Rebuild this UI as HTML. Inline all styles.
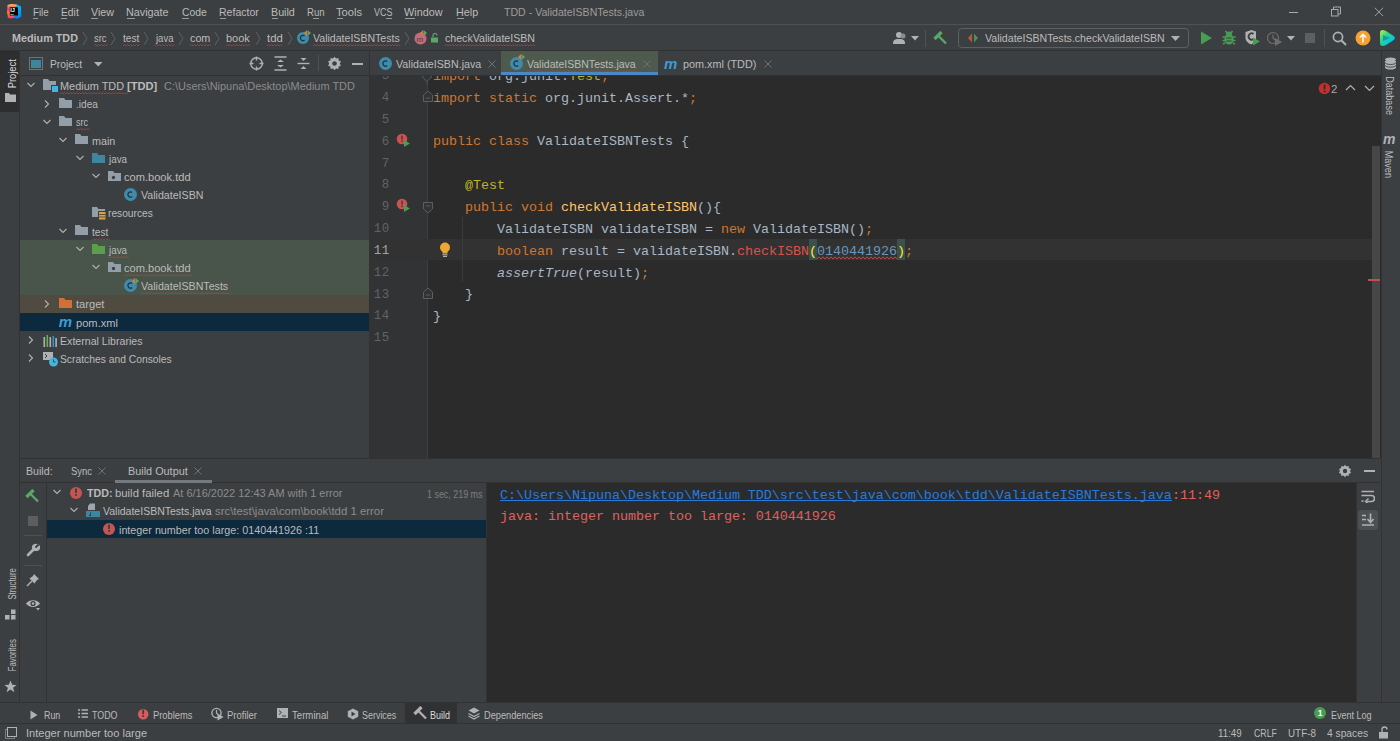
<!DOCTYPE html><html><head><meta charset="utf-8"><style>
html,body{margin:0;padding:0;width:1400px;height:741px;overflow:hidden;background:#3C3F41;}
body{position:relative;font-family:"Liberation Sans",sans-serif;}
svg{display:block}
</style></head><body>
<div style="position:absolute;left:0px;top:0px;width:1400px;height:741px;background:#3C3F41;"></div>
<div style="position:absolute;left:0px;top:24px;width:1400px;height:1px;background:#515151;"></div>
<div style="position:absolute;left:0px;top:50px;width:1400px;height:1px;background:#323232;"></div>
<div style="position:absolute;left:19px;top:51px;width:1px;height:652px;background:#323232;"></div>
<div style="position:absolute;left:0px;top:51px;width:19px;height:61px;background:#2C2E30;"></div>
<div style="position:absolute;left:20px;top:75px;width:349px;height:1px;background:#323232;"></div>
<div style="position:absolute;left:369px;top:51px;width:1px;height:407px;background:#323232;"></div>
<div style="position:absolute;left:370px;top:75px;width:1011px;height:1px;background:#323232;"></div>
<div style="position:absolute;left:370px;top:76px;width:1011px;height:382px;background:#2B2B2B;"></div>
<div style="position:absolute;left:370px;top:76px;width:58px;height:382px;background:#313335;"></div>
<div style="position:absolute;left:1381px;top:51px;width:1px;height:652px;background:#323232;"></div>
<div style="position:absolute;left:20px;top:458px;width:1360px;height:1px;background:#323232;"></div>
<div style="position:absolute;left:20px;top:482px;width:1360px;height:1px;background:#323232;"></div>
<div style="position:absolute;left:46px;top:483px;width:1px;height:219px;background:#323232;"></div>
<div style="position:absolute;left:486px;top:483px;width:1px;height:219px;background:#323232;"></div>
<div style="position:absolute;left:487px;top:483px;width:869px;height:219px;background:#2B2B2B;"></div>
<div style="position:absolute;left:1356px;top:483px;width:1px;height:219px;background:#323232;"></div>
<div style="position:absolute;left:0px;top:702px;width:1400px;height:1px;background:#323232;"></div>
<div style="position:absolute;left:0px;top:723px;width:1400px;height:1px;background:#323232;"></div>
<svg style="position:absolute;left:5px;top:2px;" width="20" height="20" viewBox="0 0 20 20"><defs><linearGradient id="lg1" x1="0" y1="0" x2="0" y2="1"><stop offset="0" stop-color="#F9C74A"/><stop offset="0.35" stop-color="#FF318C"/><stop offset="0.6" stop-color="#FC801D"/><stop offset="1" stop-color="#FF318C"/></linearGradient><linearGradient id="lg2" x1="0" y1="0" x2="0" y2="1"><stop offset="0" stop-color="#07C3F2"/><stop offset="1" stop-color="#087CFA"/></linearGradient></defs><path d="M2.5 3 L6 2 L12 2.5 L11 15 L7 16.5 L3 16 L2 10 Z" fill="url(#lg1)"/><path d="M11 2.2 L16 4.5 L16.3 14.5 L12.5 16.8 L8 15.5 L11 13Z" fill="url(#lg2)"/><rect x="4.8" y="5.3" width="8.2" height="8.2" fill="#000"/><text x="5.3" y="10.3" font-size="5.6" font-family="Liberation Sans" font-weight="bold" fill="#fff">IJ</text><rect x="5.5" y="12.2" width="3.2" height="0.8" fill="#bbb"/></svg>
<div style="position:absolute;left:32.50px;top:4.51px;font-size:11.5px;line-height:15px;color:#BBBBBB;font-family:'Liberation Sans', sans-serif;white-space:pre;transform-origin:0 0;transform:scaleX(0.8474);">File</div>
<div style="position:absolute;left:60.70px;top:4.51px;font-size:11.5px;line-height:15px;color:#BBBBBB;font-family:'Liberation Sans', sans-serif;white-space:pre;transform-origin:0 0;transform:scaleX(0.8952);">Edit</div>
<div style="position:absolute;left:90.50px;top:4.51px;font-size:11.5px;line-height:15px;color:#BBBBBB;font-family:'Liberation Sans', sans-serif;white-space:pre;transform-origin:0 0;transform:scaleX(0.9320);">View</div>
<div style="position:absolute;left:126.40px;top:4.51px;font-size:11.5px;line-height:15px;color:#BBBBBB;font-family:'Liberation Sans', sans-serif;white-space:pre;transform-origin:0 0;transform:scaleX(0.9391);">Navigate</div>
<div style="position:absolute;left:181.80px;top:4.51px;font-size:11.5px;line-height:15px;color:#BBBBBB;font-family:'Liberation Sans', sans-serif;white-space:pre;transform-origin:0 0;transform:scaleX(0.9000);">Code</div>
<div style="position:absolute;left:219.30px;top:4.51px;font-size:11.5px;line-height:15px;color:#BBBBBB;font-family:'Liberation Sans', sans-serif;white-space:pre;transform-origin:0 0;transform:scaleX(0.9159);">Refactor</div>
<div style="position:absolute;left:271.00px;top:4.51px;font-size:11.5px;line-height:15px;color:#BBBBBB;font-family:'Liberation Sans', sans-serif;white-space:pre;transform-origin:0 0;transform:scaleX(0.9308);">Build</div>
<div style="position:absolute;left:306.80px;top:4.51px;font-size:11.5px;line-height:15px;color:#BBBBBB;font-family:'Liberation Sans', sans-serif;white-space:pre;transform-origin:0 0;transform:scaleX(0.8333);">Run</div>
<div style="position:absolute;left:336.40px;top:4.51px;font-size:11.5px;line-height:15px;color:#BBBBBB;font-family:'Liberation Sans', sans-serif;white-space:pre;transform-origin:0 0;transform:scaleX(0.9741);">Tools</div>
<div style="position:absolute;left:374.30px;top:4.51px;font-size:11.5px;line-height:15px;color:#BBBBBB;font-family:'Liberation Sans', sans-serif;white-space:pre;transform-origin:0 0;transform:scaleX(0.7792);">VCS</div>
<div style="position:absolute;left:404.30px;top:4.51px;font-size:11.5px;line-height:15px;color:#BBBBBB;font-family:'Liberation Sans', sans-serif;white-space:pre;transform-origin:0 0;transform:scaleX(0.9429);">Window</div>
<div style="position:absolute;left:456.40px;top:4.51px;font-size:11.5px;line-height:15px;color:#BBBBBB;font-family:'Liberation Sans', sans-serif;white-space:pre;transform-origin:0 0;transform:scaleX(0.9375);">Help</div>
<div style="position:absolute;left:33px;top:18px;width:5px;height:1px;background:#9a9a9a;"></div>
<div style="position:absolute;left:61px;top:18px;width:6px;height:1px;background:#9a9a9a;"></div>
<div style="position:absolute;left:91px;top:18px;width:7px;height:1px;background:#9a9a9a;"></div>
<div style="position:absolute;left:127px;top:18px;width:8px;height:1px;background:#9a9a9a;"></div>
<div style="position:absolute;left:182px;top:18px;width:7px;height:1px;background:#9a9a9a;"></div>
<div style="position:absolute;left:220px;top:18px;width:6px;height:1px;background:#9a9a9a;"></div>
<div style="position:absolute;left:272px;top:18px;width:6px;height:1px;background:#9a9a9a;"></div>
<div style="position:absolute;left:313px;top:18px;width:6px;height:1px;background:#9a9a9a;"></div>
<div style="position:absolute;left:337px;top:18px;width:6px;height:1px;background:#9a9a9a;"></div>
<div style="position:absolute;left:386px;top:18px;width:6px;height:1px;background:#9a9a9a;"></div>
<div style="position:absolute;left:405px;top:18px;width:10px;height:1px;background:#9a9a9a;"></div>
<div style="position:absolute;left:457px;top:18px;width:7px;height:1px;background:#9a9a9a;"></div>
<div style="position:absolute;left:503.70px;top:4.51px;font-size:11.5px;line-height:15px;color:#9C9C9C;font-family:'Liberation Sans', sans-serif;white-space:pre;transform-origin:0 0;transform:scaleX(0.9203);">TDD - ValidateISBNTests.java</div>
<div style="position:absolute;left:1289px;top:12px;width:9px;height:1px;background:#AAAAAA;"></div>
<svg style="position:absolute;left:1331px;top:6px;" width="11" height="11" viewBox="0 0 11 11"><rect x="0.5" y="3.5" width="6.5" height="6.5" fill="none" stroke="#AAA"/><path d="M2.5 3.5 V1 H9.5 V8 H7" fill="none" stroke="#AAA"/></svg>
<svg style="position:absolute;left:1374px;top:7px;" width="10" height="10" viewBox="0 0 10 10"><path d="M0.8 0.8 L9 9 M9 0.8 L0.8 9" stroke="#AAA" stroke-width="0.9"/></svg>
<div style="position:absolute;left:12.00px;top:30.81px;font-size:11.5px;line-height:15px;color:#BBBBBB;font-family:'Liberation Sans', sans-serif;white-space:pre;font-weight:bold;transform-origin:0 0;transform:scaleX(0.9380);">Medium TDD</div>
<svg style="position:absolute;left:82px;top:31px;" width="7" height="15" viewBox="0 0 7 15"><path d="M1 1 L5 7.5 L1 14" fill="none" stroke="#5F6264" stroke-width="1"/></svg>
<svg style="position:absolute;left:110px;top:31px;" width="7" height="15" viewBox="0 0 7 15"><path d="M1 1 L5 7.5 L1 14" fill="none" stroke="#5F6264" stroke-width="1"/></svg>
<svg style="position:absolute;left:143px;top:31px;" width="7" height="15" viewBox="0 0 7 15"><path d="M1 1 L5 7.5 L1 14" fill="none" stroke="#5F6264" stroke-width="1"/></svg>
<svg style="position:absolute;left:178px;top:31px;" width="7" height="15" viewBox="0 0 7 15"><path d="M1 1 L5 7.5 L1 14" fill="none" stroke="#5F6264" stroke-width="1"/></svg>
<svg style="position:absolute;left:214px;top:31px;" width="7" height="15" viewBox="0 0 7 15"><path d="M1 1 L5 7.5 L1 14" fill="none" stroke="#5F6264" stroke-width="1"/></svg>
<svg style="position:absolute;left:255px;top:31px;" width="7" height="15" viewBox="0 0 7 15"><path d="M1 1 L5 7.5 L1 14" fill="none" stroke="#5F6264" stroke-width="1"/></svg>
<svg style="position:absolute;left:287px;top:31px;" width="7" height="15" viewBox="0 0 7 15"><path d="M1 1 L5 7.5 L1 14" fill="none" stroke="#5F6264" stroke-width="1"/></svg>
<svg style="position:absolute;left:404px;top:31px;" width="7" height="15" viewBox="0 0 7 15"><path d="M1 1 L5 7.5 L1 14" fill="none" stroke="#5F6264" stroke-width="1"/></svg>
<div style="position:absolute;left:94.00px;top:30.81px;font-size:11.5px;line-height:15px;color:#BBBBBB;font-family:'Liberation Sans', sans-serif;white-space:pre;transform-origin:0 0;transform:scaleX(0.8125);">src</div>
<svg style="position:absolute;left:94px;top:43.5px;" width="14" height="3" viewBox="0 0 14 3"><path d="M0 2 L1.5 0.5 L3 2 M3 2 L4.5 0.5 L6 2 M6 2 L7.5 0.5 L9 2 M9 2 L10.5 0.5 L12 2 M12 2 L13.5 0.5 L15 2 " fill="none" stroke="#BC3F3C" stroke-width="0.9" opacity="0.85"/></svg>
<div style="position:absolute;left:122.90px;top:30.81px;font-size:11.5px;line-height:15px;color:#BBBBBB;font-family:'Liberation Sans', sans-serif;white-space:pre;transform-origin:0 0;transform:scaleX(0.8789);">test</div>
<svg style="position:absolute;left:122.9px;top:43.5px;" width="17" height="3" viewBox="0 0 17 3"><path d="M0 2 L1.5 0.5 L3 2 M3 2 L4.5 0.5 L6 2 M6 2 L7.5 0.5 L9 2 M9 2 L10.5 0.5 L12 2 M12 2 L13.5 0.5 L15 2 M15 2 L16.5 0.5 L18 2 " fill="none" stroke="#BC3F3C" stroke-width="0.9" opacity="0.85"/></svg>
<div style="position:absolute;left:156.00px;top:30.81px;font-size:11.5px;line-height:15px;color:#BBBBBB;font-family:'Liberation Sans', sans-serif;white-space:pre;transform-origin:0 0;transform:scaleX(0.8261);">java</div>
<svg style="position:absolute;left:155px;top:43.5px;" width="20" height="3" viewBox="0 0 20 3"><path d="M0 2 L1.5 0.5 L3 2 M3 2 L4.5 0.5 L6 2 M6 2 L7.5 0.5 L9 2 M9 2 L10.5 0.5 L12 2 M12 2 L13.5 0.5 L15 2 M15 2 L16.5 0.5 L18 2 M18 2 L19.5 0.5 L21 2 " fill="none" stroke="#BC3F3C" stroke-width="0.9" opacity="0.85"/></svg>
<div style="position:absolute;left:189.80px;top:30.81px;font-size:11.5px;line-height:15px;color:#BBBBBB;font-family:'Liberation Sans', sans-serif;white-space:pre;transform-origin:0 0;transform:scaleX(0.9364);">com</div>
<svg style="position:absolute;left:189.8px;top:43.5px;" width="21" height="3" viewBox="0 0 21 3"><path d="M0 2 L1.5 0.5 L3 2 M3 2 L4.5 0.5 L6 2 M6 2 L7.5 0.5 L9 2 M9 2 L10.5 0.5 L12 2 M12 2 L13.5 0.5 L15 2 M15 2 L16.5 0.5 L18 2 M18 2 L19.5 0.5 L21 2 " fill="none" stroke="#BC3F3C" stroke-width="0.9" opacity="0.85"/></svg>
<div style="position:absolute;left:226.40px;top:30.81px;font-size:11.5px;line-height:15px;color:#BBBBBB;font-family:'Liberation Sans', sans-serif;white-space:pre;transform-origin:0 0;transform:scaleX(0.9538);">book</div>
<svg style="position:absolute;left:226.4px;top:43.5px;" width="25" height="3" viewBox="0 0 25 3"><path d="M0 2 L1.5 0.5 L3 2 M3 2 L4.5 0.5 L6 2 M6 2 L7.5 0.5 L9 2 M9 2 L10.5 0.5 L12 2 M12 2 L13.5 0.5 L15 2 M15 2 L16.5 0.5 L18 2 M18 2 L19.5 0.5 L21 2 M21 2 L22.5 0.5 L24 2 " fill="none" stroke="#BC3F3C" stroke-width="0.9" opacity="0.85"/></svg>
<div style="position:absolute;left:266.60px;top:30.81px;font-size:11.5px;line-height:15px;color:#BBBBBB;font-family:'Liberation Sans', sans-serif;white-space:pre;transform-origin:0 0;transform:scaleX(0.9875);">tdd</div>
<svg style="position:absolute;left:266.6px;top:43.5px;" width="16" height="3" viewBox="0 0 16 3"><path d="M0 2 L1.5 0.5 L3 2 M3 2 L4.5 0.5 L6 2 M6 2 L7.5 0.5 L9 2 M9 2 L10.5 0.5 L12 2 M12 2 L13.5 0.5 L15 2 " fill="none" stroke="#BC3F3C" stroke-width="0.9" opacity="0.85"/></svg>
<div style="position:absolute;left:313.00px;top:30.81px;font-size:11.5px;line-height:15px;color:#BBBBBB;font-family:'Liberation Sans', sans-serif;white-space:pre;transform-origin:0 0;transform:scaleX(0.9189);">ValidateISBNTests</div>
<svg style="position:absolute;left:313px;top:43.5px;" width="88" height="3" viewBox="0 0 88 3"><path d="M0 2 L1.5 0.5 L3 2 M3 2 L4.5 0.5 L6 2 M6 2 L7.5 0.5 L9 2 M9 2 L10.5 0.5 L12 2 M12 2 L13.5 0.5 L15 2 M15 2 L16.5 0.5 L18 2 M18 2 L19.5 0.5 L21 2 M21 2 L22.5 0.5 L24 2 M24 2 L25.5 0.5 L27 2 M27 2 L28.5 0.5 L30 2 M30 2 L31.5 0.5 L33 2 M33 2 L34.5 0.5 L36 2 M36 2 L37.5 0.5 L39 2 M39 2 L40.5 0.5 L42 2 M42 2 L43.5 0.5 L45 2 M45 2 L46.5 0.5 L48 2 M48 2 L49.5 0.5 L51 2 M51 2 L52.5 0.5 L54 2 M54 2 L55.5 0.5 L57 2 M57 2 L58.5 0.5 L60 2 M60 2 L61.5 0.5 L63 2 M63 2 L64.5 0.5 L66 2 M66 2 L67.5 0.5 L69 2 M69 2 L70.5 0.5 L72 2 M72 2 L73.5 0.5 L75 2 M75 2 L76.5 0.5 L78 2 M78 2 L79.5 0.5 L81 2 M81 2 L82.5 0.5 L84 2 M84 2 L85.5 0.5 L87 2 " fill="none" stroke="#BC3F3C" stroke-width="0.9" opacity="0.85"/></svg>
<div style="position:absolute;left:445.00px;top:30.81px;font-size:11.5px;line-height:15px;color:#BBBBBB;font-family:'Liberation Sans', sans-serif;white-space:pre;transform-origin:0 0;transform:scaleX(0.9224);">checkValidateISBN</div>
<svg style="position:absolute;left:445px;top:43.5px;" width="91" height="3" viewBox="0 0 91 3"><path d="M0 2 L1.5 0.5 L3 2 M3 2 L4.5 0.5 L6 2 M6 2 L7.5 0.5 L9 2 M9 2 L10.5 0.5 L12 2 M12 2 L13.5 0.5 L15 2 M15 2 L16.5 0.5 L18 2 M18 2 L19.5 0.5 L21 2 M21 2 L22.5 0.5 L24 2 M24 2 L25.5 0.5 L27 2 M27 2 L28.5 0.5 L30 2 M30 2 L31.5 0.5 L33 2 M33 2 L34.5 0.5 L36 2 M36 2 L37.5 0.5 L39 2 M39 2 L40.5 0.5 L42 2 M42 2 L43.5 0.5 L45 2 M45 2 L46.5 0.5 L48 2 M48 2 L49.5 0.5 L51 2 M51 2 L52.5 0.5 L54 2 M54 2 L55.5 0.5 L57 2 M57 2 L58.5 0.5 L60 2 M60 2 L61.5 0.5 L63 2 M63 2 L64.5 0.5 L66 2 M66 2 L67.5 0.5 L69 2 M69 2 L70.5 0.5 L72 2 M72 2 L73.5 0.5 L75 2 M75 2 L76.5 0.5 L78 2 M78 2 L79.5 0.5 L81 2 M81 2 L82.5 0.5 L84 2 M84 2 L85.5 0.5 L87 2 M87 2 L88.5 0.5 L90 2 " fill="none" stroke="#BC3F3C" stroke-width="0.9" opacity="0.85"/></svg>
<svg style="position:absolute;left:295.6px;top:31px;" width="14" height="14" viewBox="0 0 14 14"><circle cx="7" cy="7" r="6" fill="#3E8BAB"/><path d="M8.6 5.0 A2.5 2.6 0 1 0 8.6 9.0" fill="none" stroke="#22313A" stroke-width="1.15"/></svg>
<svg style="position:absolute;left:304px;top:30px;" width="7" height="6" viewBox="0 0 7 6"><path d="M0 3 L3 0 L3 6Z" fill="#E2783A"/><path d="M3.5 0 L7 3 L3.5 6Z" fill="#59A869"/></svg>
<svg style="position:absolute;left:414px;top:32px;" width="13" height="13" viewBox="0 0 13 13"><circle cx="6.5" cy="6.5" r="6" fill="#C46A7B"/><text x="2.6" y="9.5" font-size="8" font-family="Liberation Sans" fill="#3C3F41">m</text></svg>
<svg style="position:absolute;left:420px;top:30px;" width="7" height="6" viewBox="0 0 7 6"><path d="M0 3 L3 0 L3 6Z" fill="#E2783A"/><path d="M3.5 0 L7 3 L3.5 6Z" fill="#59A869"/></svg>
<svg style="position:absolute;left:430px;top:33px;" width="9" height="10" viewBox="0 0 9 10"><path d="M3 4 V2.5 A2 2 0 0 1 7 2.5" fill="none" stroke="#59A869" stroke-width="1.2"/><rect x="1" y="4.5" width="7" height="5" fill="#59A869"/></svg>
<svg style="position:absolute;left:893px;top:31px;" width="16" height="14" viewBox="0 0 16 14"><circle cx="6" cy="4" r="3" fill="#AFB1B3"/><path d="M0 13 C0 8 3 8 6 8 C9 8 12 8 12 13 Z" fill="#AFB1B3"/><circle cx="10" cy="5" r="2.5" fill="#8a8c8e"/></svg>
<svg style="position:absolute;left:911px;top:36px;" width="8" height="5" viewBox="0 0 8 5"><path d="M0 0 H8 L4 4.5Z" fill="#AFB1B3"/></svg>
<div style="position:absolute;left:925px;top:30px;width:1px;height:17px;background:#515151;"></div>
<svg style="position:absolute;left:933px;top:31px;" width="15" height="14" viewBox="0 0 15 14"><path d="M1.5 8 L8.5 1" stroke="#59A869" stroke-width="3.2"/><path d="M5 4.5 L13 12.5" stroke="#59A869" stroke-width="2.3"/></svg>
<svg style="position:absolute;left:958px;top:28px;" width="231" height="20" viewBox="0 0 231 20"><rect x="0.5" y="0.5" width="230" height="19" rx="3" fill="none" stroke="#5E6060"/></svg>
<svg style="position:absolute;left:967px;top:33px;" width="13" height="10" viewBox="0 0 13 10"><path d="M5 0.5 L1 5 L5 9.5Z" fill="#B05A3C"/><path d="M7 0.5 L11 5 L7 9.5Z" fill="#4E8F5B"/></svg>
<div style="position:absolute;left:984.50px;top:31.01px;font-size:11.5px;line-height:15px;color:#BBBBBB;font-family:'Liberation Sans', sans-serif;white-space:pre;transform-origin:0 0;transform:scaleX(0.9205);">ValidateISBNTests.checkValidateISBN</div>
<svg style="position:absolute;left:1171px;top:36px;" width="10" height="6" viewBox="0 0 10 6"><path d="M0 0 H9 L4.5 5Z" fill="#AFB1B3"/></svg>
<svg style="position:absolute;left:1200px;top:31px;" width="13" height="14" viewBox="0 0 13 14"><path d="M1 0.5 L12 7 L1 13.5 Z" fill="#499C54"/></svg>
<svg style="position:absolute;left:1221px;top:30px;" width="16" height="16" viewBox="0 0 16 16"><ellipse cx="8" cy="9.3" rx="4.6" ry="5.2" fill="#499C54"/><ellipse cx="8" cy="3.8" rx="3" ry="2.2" fill="#499C54"/><path d="M4.5 1 L6 3 M11.5 1 L10 3 M1.5 7 H4 M12 7 H14.5 M1.5 10.5 H4 M12 10.5 H14.5 M2 14 L4.2 12.8 M14 14 L11.8 12.8" stroke="#499C54" stroke-width="1.5"/><path d="M5.5 8 H10.5 M5.5 11 H10.5" stroke="#3C3F41" stroke-width="1.1"/></svg>
<svg style="position:absolute;left:1244px;top:29px;" width="17" height="17" viewBox="0 0 17 17"><path d="M1.5 3 L7.5 1 L12 2.5 V9 C12 12 9 14.5 7 15.5 C4.5 14.5 1.5 12 1.5 9Z" fill="#AFB1B3"/><path d="M9.5 5 A3 3.2 0 1 0 9.5 10" fill="none" stroke="#3C3F41" stroke-width="1.8"/><path d="M9 8.5 L16 12.5 L9 16.5Z" fill="#499C54"/></svg>
<svg style="position:absolute;left:1266px;top:30px;" width="18" height="16" viewBox="0 0 18 16"><circle cx="7" cy="8" r="5.5" fill="none" stroke="#6E6E6E" stroke-width="1.2"/><path d="M7 4.5 V8 L9 10" stroke="#6E6E6E" stroke-width="1.2" fill="none"/><path d="M9 8 L16 12 L9 16Z" fill="#6E6E6E"/></svg>
<svg style="position:absolute;left:1287px;top:36px;" width="9" height="5" viewBox="0 0 9 5"><path d="M0 0 H8 L4 4.5Z" fill="#AFB1B3"/></svg>
<div style="position:absolute;left:1305px;top:33px;width:10px;height:10px;background:#5C5E60;"></div>
<div style="position:absolute;left:1324px;top:29px;width:1px;height:18px;background:#515151;"></div>
<svg style="position:absolute;left:1332px;top:31px;" width="15" height="15" viewBox="0 0 15 15"><circle cx="6" cy="6" r="4.6" fill="none" stroke="#AFB1B3" stroke-width="1.7"/><path d="M9.5 9.5 L14 14" stroke="#AFB1B3" stroke-width="1.9"/></svg>
<svg style="position:absolute;left:1355px;top:30px;" width="16" height="16" viewBox="0 0 16 16"><circle cx="8" cy="8" r="7.5" fill="#F4A12F"/><path d="M8 12.5 V4.5 M4.8 7.5 L8 4.3 L11.2 7.5" fill="none" stroke="#fff" stroke-width="1.5"/></svg>
<svg style="position:absolute;left:1378px;top:29px;" width="18" height="18" viewBox="0 0 18 18"><defs><linearGradient id="tb1" x1="0" y1="0" x2="1" y2="1"><stop offset="0" stop-color="#C7E54B"/><stop offset="0.4" stop-color="#21D789"/><stop offset="0.75" stop-color="#07C3F2"/><stop offset="1" stop-color="#087CFA"/></linearGradient></defs><path d="M2 4 C2 0.5 5 0.5 8 2 L15 6.5 C17.5 8 17.5 10 15 11.5 L8 16 C5 17.5 2 17.5 2 14 Z" fill="url(#tb1)"/><path d="M5 6 L12 9 L5 12Z" fill="#0B69C7" opacity="0.55"/></svg>
<svg style="position:absolute;left:29px;top:57px;" width="14" height="13" viewBox="0 0 14 13"><rect x="0.5" y="0.5" width="13" height="12" fill="none" stroke="#6E7275"/><rect x="2" y="3" width="10" height="8" fill="#3E86A0"/></svg>
<div style="position:absolute;left:49.70px;top:57.01px;font-size:11.5px;line-height:15px;color:#BBBBBB;font-family:'Liberation Sans', sans-serif;white-space:pre;transform-origin:0 0;transform:scaleX(0.8946);">Project</div>
<svg style="position:absolute;left:94px;top:62px;" width="9" height="5" viewBox="0 0 9 5"><path d="M0 0 H8.5 L4.25 4.5Z" fill="#AFB1B3"/></svg>
<svg style="position:absolute;left:249px;top:56px;" width="15" height="15" viewBox="0 0 15 15"><circle cx="7.5" cy="7.5" r="5.8" fill="none" stroke="#AFB1B3" stroke-width="1.4"/><path d="M7.5 0.5 V4.5 M7.5 10.5 V14.5 M0.5 7.5 H4.5 M10.5 7.5 H14.5" stroke="#AFB1B3" stroke-width="1.4"/></svg>
<svg style="position:absolute;left:274px;top:56px;" width="13" height="15" viewBox="0 0 13 15"><path d="M0.5 1 H12.5 M0.5 14 H12.5" stroke="#AFB1B3" stroke-width="1.6"/><path d="M3 6 L6.5 3.5 L10 6Z M3 9 L6.5 11.5 L10 9Z" fill="#AFB1B3"/></svg>
<svg style="position:absolute;left:297px;top:56px;" width="13" height="15" viewBox="0 0 13 15"><path d="M0.5 7.5 H12.5" stroke="#AFB1B3" stroke-width="1.4"/><path d="M3.5 2 H9.5 L6.5 5Z M3.5 13 H9.5 L6.5 10Z" fill="#AFB1B3"/></svg>
<div style="position:absolute;left:318px;top:55px;width:1px;height:16px;background:#515151;"></div>
<svg style="position:absolute;left:327px;top:56px;" width="15" height="15" viewBox="0 0 15 15"><path d="M7.5 0.8 L9 2.6 L11.4 2.1 L11.6 4.4 L13.9 5.2 L12.8 7.5 L13.9 9.8 L11.6 10.6 L11.4 12.9 L9 12.4 L7.5 14.2 L6 12.4 L3.6 12.9 L3.4 10.6 L1.1 9.8 L2.2 7.5 L1.1 5.2 L3.4 4.4 L3.6 2.1 L6 2.6 Z" fill="#AFB1B3"/><circle cx="7.5" cy="7.5" r="2.3" fill="#3C3F41"/></svg>
<div style="position:absolute;left:352px;top:63px;width:11px;height:1.6px;background:#AFB1B3;"></div>
<div style="position:absolute;left:20px;top:240.0px;width:349px;height:54.599999999999994px;background:#49544A;"></div>
<div style="position:absolute;left:20px;top:294.59999999999997px;width:349px;height:18.2px;background:#4F4B41;"></div>
<div style="position:absolute;left:20px;top:312.8px;width:349px;height:18.599999999999998px;background:#0D293E;"></div>
<svg style="position:absolute;left:26.0px;top:81.3px;" width="10" height="8" viewBox="0 0 10 8"><path d="M1.5 2 L5 5.5 L8.5 2" fill="none" stroke="#AFB1B3" stroke-width="1.1"/></svg>
<svg style="position:absolute;left:43.0px;top:79px;" width="13" height="11" viewBox="0 0 13 11"><path d="M0 0 H5 L6.5 2 H13 V11 H0 Z" fill="#939FA8"/></svg>
<div style="position:absolute;left:51.0px;top:85px;width:7px;height:7px;background:#3C3F41;"></div>
<div style="position:absolute;left:52.0px;top:86px;width:6px;height:6px;background:#40B6E0;"></div>
<svg style="position:absolute;left:43.2px;top:98.5px;" width="8" height="10" viewBox="0 0 8 10"><path d="M2 1.5 L5.5 5 L2 8.5" fill="none" stroke="#AFB1B3" stroke-width="1.1"/></svg>
<svg style="position:absolute;left:59.2px;top:98px;" width="13" height="10" viewBox="0 0 13 10"><path d="M0 0 H5 L6.5 2 H13 V10 H0 Z" fill="#939FA8"/></svg>
<svg style="position:absolute;left:42.2px;top:117.69999999999999px;" width="10" height="8" viewBox="0 0 10 8"><path d="M1.5 2 L5 5.5 L8.5 2" fill="none" stroke="#AFB1B3" stroke-width="1.1"/></svg>
<svg style="position:absolute;left:59.2px;top:116px;" width="13" height="10" viewBox="0 0 13 10"><path d="M0 0 H5 L6.5 2 H13 V10 H0 Z" fill="#939FA8"/></svg>
<svg style="position:absolute;left:58.4px;top:135.9px;" width="10" height="8" viewBox="0 0 10 8"><path d="M1.5 2 L5 5.5 L8.5 2" fill="none" stroke="#AFB1B3" stroke-width="1.1"/></svg>
<svg style="position:absolute;left:75.4px;top:134px;" width="13" height="10" viewBox="0 0 13 10"><path d="M0 0 H5 L6.5 2 H13 V10 H0 Z" fill="#939FA8"/></svg>
<svg style="position:absolute;left:74.6px;top:154.1px;" width="10" height="8" viewBox="0 0 10 8"><path d="M1.5 2 L5 5.5 L8.5 2" fill="none" stroke="#AFB1B3" stroke-width="1.1"/></svg>
<svg style="position:absolute;left:91.6px;top:153px;" width="13" height="10" viewBox="0 0 13 10"><path d="M0 0 H5 L6.5 2 H13 V10 H0 Z" fill="#3E86A0"/></svg>
<svg style="position:absolute;left:90.8px;top:172.29999999999998px;" width="10" height="8" viewBox="0 0 10 8"><path d="M1.5 2 L5 5.5 L8.5 2" fill="none" stroke="#AFB1B3" stroke-width="1.1"/></svg>
<svg style="position:absolute;left:107.8px;top:171px;" width="13" height="10" viewBox="0 0 13 10"><path d="M0 0 H5 L6.5 2 H13 V10 H0 Z" fill="#939FA8"/></svg>
<svg style="position:absolute;left:110.8px;top:175px;" width="5" height="5" viewBox="0 0 5 5"><circle cx="2.5" cy="2.5" r="1.7" fill="#3C3F41"/></svg>
<svg style="position:absolute;left:123.0px;top:186.99999999999997px;" width="15" height="15" viewBox="0 0 15 15"><circle cx="7.5" cy="7.5" r="6.5" fill="#3E8BAB"/><path d="M9.1 5.5 A2.5 2.6 0 1 0 9.1 9.5" fill="none" stroke="#22313A" stroke-width="1.15"/></svg>
<svg style="position:absolute;left:91.6px;top:207px;" width="13" height="10" viewBox="0 0 13 10"><path d="M0 0 H5 L6.5 2 H13 V10 H0 Z" fill="#939FA8"/></svg>
<svg style="position:absolute;left:97.6px;top:211px;" width="8" height="9" viewBox="0 0 8 9"><rect x="0" y="0" width="8" height="9" fill="#3C3F41"/><rect x="1" y="1" width="6.5" height="7.5" fill="#D9A343"/><path d="M1 3.5 H7.5 M1 6 H7.5" stroke="#3C3F41" stroke-width="0.8"/></svg>
<svg style="position:absolute;left:58.4px;top:226.9px;" width="10" height="8" viewBox="0 0 10 8"><path d="M1.5 2 L5 5.5 L8.5 2" fill="none" stroke="#AFB1B3" stroke-width="1.1"/></svg>
<svg style="position:absolute;left:75.4px;top:225px;" width="13" height="10" viewBox="0 0 13 10"><path d="M0 0 H5 L6.5 2 H13 V10 H0 Z" fill="#939FA8"/></svg>
<svg style="position:absolute;left:74.6px;top:245.1px;" width="10" height="8" viewBox="0 0 10 8"><path d="M1.5 2 L5 5.5 L8.5 2" fill="none" stroke="#AFB1B3" stroke-width="1.1"/></svg>
<svg style="position:absolute;left:91.6px;top:244px;" width="13" height="10" viewBox="0 0 13 10"><path d="M0 0 H5 L6.5 2 H13 V10 H0 Z" fill="#5AA04A"/></svg>
<svg style="position:absolute;left:90.8px;top:263.3px;" width="10" height="8" viewBox="0 0 10 8"><path d="M1.5 2 L5 5.5 L8.5 2" fill="none" stroke="#AFB1B3" stroke-width="1.1"/></svg>
<svg style="position:absolute;left:107.8px;top:262px;" width="13" height="10" viewBox="0 0 13 10"><path d="M0 0 H5 L6.5 2 H13 V10 H0 Z" fill="#939FA8"/></svg>
<svg style="position:absolute;left:110.8px;top:266px;" width="5" height="5" viewBox="0 0 5 5"><circle cx="2.5" cy="2.5" r="1.7" fill="#3C3F41"/></svg>
<svg style="position:absolute;left:123.0px;top:278.0px;" width="15" height="15" viewBox="0 0 15 15"><circle cx="7.5" cy="7.5" r="6.5" fill="#3E8BAB"/><path d="M9.1 5.5 A2.5 2.6 0 1 0 9.1 9.5" fill="none" stroke="#22313A" stroke-width="1.15"/></svg>
<svg style="position:absolute;left:132.0px;top:278px;" width="7" height="6" viewBox="0 0 7 6"><path d="M0 3 L3 0 L3 6Z" fill="#E2783A"/><path d="M3.5 0 L7 3 L3.5 6Z" fill="#59A869"/></svg>
<svg style="position:absolute;left:43.2px;top:298.7px;" width="8" height="10" viewBox="0 0 8 10"><path d="M2 1.5 L5.5 5 L2 8.5" fill="none" stroke="#AFB1B3" stroke-width="1.1"/></svg>
<svg style="position:absolute;left:59.2px;top:298px;" width="13" height="10" viewBox="0 0 13 10"><path d="M0 0 H5 L6.5 2 H13 V10 H0 Z" fill="#D2703A"/></svg>
<div style="position:absolute;left:58.70px;top:312.10px;font-size:15px;line-height:20px;color:#3F9BD0;font-family:'Liberation Sans', sans-serif;white-space:pre;font-weight:bold;font-style:italic;letter-spacing:-0.500px;">m</div>
<svg style="position:absolute;left:27.0px;top:335.1px;" width="8" height="10" viewBox="0 0 8 10"><path d="M2 1.5 L5.5 5 L2 8.5" fill="none" stroke="#AFB1B3" stroke-width="1.1"/></svg>
<svg style="position:absolute;left:43.0px;top:335px;" width="14" height="12" viewBox="0 0 14 12"><rect x="0.5" y="2" width="1.6" height="10" fill="#AFB1B3"/><rect x="3.5" y="0" width="1.6" height="12" fill="#62B543"/><rect x="6.5" y="2" width="1.6" height="10" fill="#AFB1B3"/><rect x="9.5" y="1" width="1.6" height="11" fill="#3592C4"/><rect x="12.3" y="3" width="1.6" height="9" fill="#AFB1B3"/></svg>
<svg style="position:absolute;left:27.0px;top:353.3px;" width="8" height="10" viewBox="0 0 8 10"><path d="M2 1.5 L5.5 5 L2 8.5" fill="none" stroke="#AFB1B3" stroke-width="1.1"/></svg>
<svg style="position:absolute;left:43.0px;top:352px;" width="15" height="15" viewBox="0 0 15 15"><rect x="0" y="0" width="10" height="8" fill="#AFB1B3"/><path d="M2 2 L4 4 L2 6" stroke="#3C3F41" fill="none"/><circle cx="10.5" cy="10" r="4.5" fill="#40B6E0"/><path d="M10.5 7.5 V10 H12.5" stroke="#3C3F41" fill="none" stroke-width="0.9"/></svg>
<div style="position:absolute;left:59.60px;top:78.91px;font-size:11.5px;line-height:15px;color:#BBBBBB;font-family:'Liberation Sans', sans-serif;white-space:pre;transform-origin:0 0;transform:scaleX(0.9485);">Medium TDD</div>
<svg style="position:absolute;left:59.6px;top:92.0px;" width="68" height="3" viewBox="0 0 68 3"><path d="M0 2 L1.5 0.5 L3 2 M3 2 L4.5 0.5 L6 2 M6 2 L7.5 0.5 L9 2 M9 2 L10.5 0.5 L12 2 M12 2 L13.5 0.5 L15 2 M15 2 L16.5 0.5 L18 2 M18 2 L19.5 0.5 L21 2 M21 2 L22.5 0.5 L24 2 M24 2 L25.5 0.5 L27 2 M27 2 L28.5 0.5 L30 2 M30 2 L31.5 0.5 L33 2 M33 2 L34.5 0.5 L36 2 M36 2 L37.5 0.5 L39 2 M39 2 L40.5 0.5 L42 2 M42 2 L43.5 0.5 L45 2 M45 2 L46.5 0.5 L48 2 M48 2 L49.5 0.5 L51 2 M51 2 L52.5 0.5 L54 2 M54 2 L55.5 0.5 L57 2 M57 2 L58.5 0.5 L60 2 M60 2 L61.5 0.5 L63 2 M63 2 L64.5 0.5 L66 2 M66 2 L67.5 0.5 L69 2 " fill="none" stroke="#BC3F3C" stroke-width="0.9" opacity="0.85"/></svg>
<div style="position:absolute;left:127.30px;top:78.91px;font-size:11.5px;line-height:15px;color:#BBBBBB;font-family:'Liberation Sans', sans-serif;white-space:pre;font-weight:bold;transform-origin:0 0;transform:scaleX(0.9677);">[TDD]</div>
<div style="position:absolute;left:163.80px;top:78.91px;font-size:11.5px;line-height:15px;color:#8C8C8C;font-family:'Liberation Sans', sans-serif;white-space:pre;transform-origin:0 0;transform:scaleX(0.9522);">C:\Users\Nipuna\Desktop\Medium TDD</div>
<div style="position:absolute;left:75.80px;top:97.11px;font-size:11.5px;line-height:15px;color:#BBBBBB;font-family:'Liberation Sans', sans-serif;white-space:pre;transform-origin:0 0;transform:scaleX(0.8769);">.idea</div>
<div style="position:absolute;left:75.80px;top:115.31px;font-size:11.5px;line-height:15px;color:#BBBBBB;font-family:'Liberation Sans', sans-serif;white-space:pre;transform-origin:0 0;transform:scaleX(0.7875);">src</div>
<div style="position:absolute;left:92.00px;top:133.51px;font-size:11.5px;line-height:15px;color:#BBBBBB;font-family:'Liberation Sans', sans-serif;white-space:pre;transform-origin:0 0;transform:scaleX(0.9360);">main</div>
<div style="position:absolute;left:109.20px;top:151.71px;font-size:11.5px;line-height:15px;color:#BBBBBB;font-family:'Liberation Sans', sans-serif;white-space:pre;transform-origin:0 0;transform:scaleX(0.8522);">java</div>
<div style="position:absolute;left:124.40px;top:169.91px;font-size:11.5px;line-height:15px;color:#BBBBBB;font-family:'Liberation Sans', sans-serif;white-space:pre;transform-origin:0 0;transform:scaleX(0.9638);">com.book.tdd</div>
<div style="position:absolute;left:140.60px;top:188.11px;font-size:11.5px;line-height:15px;color:#BBBBBB;font-family:'Liberation Sans', sans-serif;white-space:pre;transform-origin:0 0;transform:scaleX(0.9235);">ValidateISBN</div>
<div style="position:absolute;left:108.20px;top:206.31px;font-size:11.5px;line-height:15px;color:#BBBBBB;font-family:'Liberation Sans', sans-serif;white-space:pre;transform-origin:0 0;transform:scaleX(0.8863);">resources</div>
<div style="position:absolute;left:92.00px;top:224.51px;font-size:11.5px;line-height:15px;color:#BBBBBB;font-family:'Liberation Sans', sans-serif;white-space:pre;transform-origin:0 0;transform:scaleX(0.8737);">test</div>
<div style="position:absolute;left:109.20px;top:242.71px;font-size:11.5px;line-height:15px;color:#BBBBBB;font-family:'Liberation Sans', sans-serif;white-space:pre;transform-origin:0 0;transform:scaleX(0.8522);">java</div>
<div style="position:absolute;left:124.40px;top:260.91px;font-size:11.5px;line-height:15px;color:#BBBBBB;font-family:'Liberation Sans', sans-serif;white-space:pre;transform-origin:0 0;transform:scaleX(0.9638);">com.book.tdd</div>
<div style="position:absolute;left:140.60px;top:279.11px;font-size:11.5px;line-height:15px;color:#BBBBBB;font-family:'Liberation Sans', sans-serif;white-space:pre;transform-origin:0 0;transform:scaleX(0.9232);">ValidateISBNTests</div>
<div style="position:absolute;left:76.40px;top:297.31px;font-size:11.5px;line-height:15px;color:#BBBBBB;font-family:'Liberation Sans', sans-serif;white-space:pre;transform-origin:0 0;transform:scaleX(0.9667);">target</div>
<div style="position:absolute;left:75.80px;top:315.51px;font-size:11.5px;line-height:15px;color:#BBBBBB;font-family:'Liberation Sans', sans-serif;white-space:pre;transform-origin:0 0;transform:scaleX(0.9674);">pom.xml</div>
<div style="position:absolute;left:59.60px;top:333.71px;font-size:11.5px;line-height:15px;color:#BBBBBB;font-family:'Liberation Sans', sans-serif;white-space:pre;transform-origin:0 0;transform:scaleX(0.9222);">External Libraries</div>
<div style="position:absolute;left:59.60px;top:351.91px;font-size:11.5px;line-height:15px;color:#BBBBBB;font-family:'Liberation Sans', sans-serif;white-space:pre;transform-origin:0 0;transform:scaleX(0.8960);">Scratches and Consoles</div>
<svg style="position:absolute;left:75.8px;top:128.4px;" width="14" height="3" viewBox="0 0 14 3"><path d="M0 2 L1.5 0.5 L3 2 M3 2 L4.5 0.5 L6 2 M6 2 L7.5 0.5 L9 2 M9 2 L10.5 0.5 L12 2 M12 2 L13.5 0.5 L15 2 " fill="none" stroke="#BC3F3C" stroke-width="0.9" opacity="0.85"/></svg>
<svg style="position:absolute;left:92.0px;top:237.6px;" width="18" height="3" viewBox="0 0 18 3"><path d="M0 2 L1.5 0.5 L3 2 M3 2 L4.5 0.5 L6 2 M6 2 L7.5 0.5 L9 2 M9 2 L10.5 0.5 L12 2 M12 2 L13.5 0.5 L15 2 M15 2 L16.5 0.5 L18 2 " fill="none" stroke="#BC3F3C" stroke-width="0.9" opacity="0.85"/></svg>
<svg style="position:absolute;left:108.19999999999999px;top:255.79999999999998px;" width="21" height="3" viewBox="0 0 21 3"><path d="M0 2 L1.5 0.5 L3 2 M3 2 L4.5 0.5 L6 2 M6 2 L7.5 0.5 L9 2 M9 2 L10.5 0.5 L12 2 M12 2 L13.5 0.5 L15 2 M15 2 L16.5 0.5 L18 2 M18 2 L19.5 0.5 L21 2 " fill="none" stroke="#BC3F3C" stroke-width="0.9" opacity="0.85"/></svg>
<svg style="position:absolute;left:124.4px;top:274.0px;" width="68" height="3" viewBox="0 0 68 3"><path d="M0 2 L1.5 0.5 L3 2 M3 2 L4.5 0.5 L6 2 M6 2 L7.5 0.5 L9 2 M9 2 L10.5 0.5 L12 2 M12 2 L13.5 0.5 L15 2 M15 2 L16.5 0.5 L18 2 M18 2 L19.5 0.5 L21 2 M21 2 L22.5 0.5 L24 2 M24 2 L25.5 0.5 L27 2 M27 2 L28.5 0.5 L30 2 M30 2 L31.5 0.5 L33 2 M33 2 L34.5 0.5 L36 2 M36 2 L37.5 0.5 L39 2 M39 2 L40.5 0.5 L42 2 M42 2 L43.5 0.5 L45 2 M45 2 L46.5 0.5 L48 2 M48 2 L49.5 0.5 L51 2 M51 2 L52.5 0.5 L54 2 M54 2 L55.5 0.5 L57 2 M57 2 L58.5 0.5 L60 2 M60 2 L61.5 0.5 L63 2 M63 2 L64.5 0.5 L66 2 M66 2 L67.5 0.5 L69 2 " fill="none" stroke="#BC3F3C" stroke-width="0.9" opacity="0.85"/></svg>
<svg style="position:absolute;left:140.6px;top:292.2px;" width="89" height="3" viewBox="0 0 89 3"><path d="M0 2 L1.5 0.5 L3 2 M3 2 L4.5 0.5 L6 2 M6 2 L7.5 0.5 L9 2 M9 2 L10.5 0.5 L12 2 M12 2 L13.5 0.5 L15 2 M15 2 L16.5 0.5 L18 2 M18 2 L19.5 0.5 L21 2 M21 2 L22.5 0.5 L24 2 M24 2 L25.5 0.5 L27 2 M27 2 L28.5 0.5 L30 2 M30 2 L31.5 0.5 L33 2 M33 2 L34.5 0.5 L36 2 M36 2 L37.5 0.5 L39 2 M39 2 L40.5 0.5 L42 2 M42 2 L43.5 0.5 L45 2 M45 2 L46.5 0.5 L48 2 M48 2 L49.5 0.5 L51 2 M51 2 L52.5 0.5 L54 2 M54 2 L55.5 0.5 L57 2 M57 2 L58.5 0.5 L60 2 M60 2 L61.5 0.5 L63 2 M63 2 L64.5 0.5 L66 2 M66 2 L67.5 0.5 L69 2 M69 2 L70.5 0.5 L72 2 M72 2 L73.5 0.5 L75 2 M75 2 L76.5 0.5 L78 2 M78 2 L79.5 0.5 L81 2 M81 2 L82.5 0.5 L84 2 M84 2 L85.5 0.5 L87 2 M87 2 L88.5 0.5 L90 2 " fill="none" stroke="#BC3F3C" stroke-width="0.9" opacity="0.85"/></svg>
<div style="position:absolute;left:501px;top:51px;width:157px;height:24px;background:#4E5A4D;"></div>
<div style="position:absolute;left:501px;top:72px;width:157px;height:3px;background:#4A88C7;"></div>
<svg style="position:absolute;left:377.6px;top:56.0px;" width="15" height="15" viewBox="0 0 15 15"><circle cx="7.5" cy="7.5" r="6.5" fill="#3E8BAB"/><path d="M9.1 5.5 A2.5 2.6 0 1 0 9.1 9.5" fill="none" stroke="#22313A" stroke-width="1.15"/></svg>
<div style="position:absolute;left:396.00px;top:56.51px;font-size:11.5px;line-height:15px;color:#BBBBBB;font-family:'Liberation Sans', sans-serif;white-space:pre;transform-origin:0 0;transform:scaleX(0.9283);">ValidateISBN.java</div>
<svg style="position:absolute;left:487.6px;top:59.5px;" width="8" height="8" viewBox="0 0 8 8"><path d="M0.5 0.5 L7.5 7.5 M7.5 0.5 L0.5 7.5" stroke="#6E7072" stroke-width="1"/></svg>
<svg style="position:absolute;left:508.70000000000005px;top:56.0px;" width="15" height="15" viewBox="0 0 15 15"><circle cx="7.5" cy="7.5" r="6.5" fill="#3E8BAB"/><path d="M9.1 5.5 A2.5 2.6 0 1 0 9.1 9.5" fill="none" stroke="#22313A" stroke-width="1.15"/></svg>
<svg style="position:absolute;left:518px;top:54px;" width="7" height="6" viewBox="0 0 7 6"><path d="M0 3 L3 0 L3 6Z" fill="#E2783A"/><path d="M3.5 0 L7 3 L3.5 6Z" fill="#59A869"/></svg>
<div style="position:absolute;left:527.40px;top:56.51px;font-size:11.5px;line-height:15px;color:#BBBBBB;font-family:'Liberation Sans', sans-serif;white-space:pre;transform-origin:0 0;transform:scaleX(0.9160);">ValidateISBNTests.java</div>
<svg style="position:absolute;left:527.4px;top:69.5px;" width="110" height="3" viewBox="0 0 110 3"><path d="M0 2 L1.5 0.5 L3 2 M3 2 L4.5 0.5 L6 2 M6 2 L7.5 0.5 L9 2 M9 2 L10.5 0.5 L12 2 M12 2 L13.5 0.5 L15 2 M15 2 L16.5 0.5 L18 2 M18 2 L19.5 0.5 L21 2 M21 2 L22.5 0.5 L24 2 M24 2 L25.5 0.5 L27 2 M27 2 L28.5 0.5 L30 2 M30 2 L31.5 0.5 L33 2 M33 2 L34.5 0.5 L36 2 M36 2 L37.5 0.5 L39 2 M39 2 L40.5 0.5 L42 2 M42 2 L43.5 0.5 L45 2 M45 2 L46.5 0.5 L48 2 M48 2 L49.5 0.5 L51 2 M51 2 L52.5 0.5 L54 2 M54 2 L55.5 0.5 L57 2 M57 2 L58.5 0.5 L60 2 M60 2 L61.5 0.5 L63 2 M63 2 L64.5 0.5 L66 2 M66 2 L67.5 0.5 L69 2 M69 2 L70.5 0.5 L72 2 M72 2 L73.5 0.5 L75 2 M75 2 L76.5 0.5 L78 2 M78 2 L79.5 0.5 L81 2 M81 2 L82.5 0.5 L84 2 M84 2 L85.5 0.5 L87 2 M87 2 L88.5 0.5 L90 2 M90 2 L91.5 0.5 L93 2 M93 2 L94.5 0.5 L96 2 M96 2 L97.5 0.5 L99 2 M99 2 L100.5 0.5 L102 2 M102 2 L103.5 0.5 L105 2 M105 2 L106.5 0.5 L108 2 M108 2 L109.5 0.5 L111 2 " fill="none" stroke="#BC3F3C" stroke-width="0.9" opacity="0.85"/></svg>
<svg style="position:absolute;left:643.4px;top:59.5px;" width="8" height="8" viewBox="0 0 8 8"><path d="M0.5 0.5 L7.5 7.5 M7.5 0.5 L0.5 7.5" stroke="#6E7072" stroke-width="1"/></svg>
<div style="position:absolute;left:664.00px;top:53.80px;font-size:15px;line-height:20px;color:#3F9BD0;font-family:'Liberation Sans', sans-serif;white-space:pre;font-weight:bold;font-style:italic;letter-spacing:-0.500px;">m</div>
<div style="position:absolute;left:683.20px;top:56.51px;font-size:11.5px;line-height:15px;color:#BBBBBB;font-family:'Liberation Sans', sans-serif;white-space:pre;transform-origin:0 0;transform:scaleX(0.9410);">pom.xml (TDD)</div>
<svg style="position:absolute;left:764px;top:59.5px;" width="8" height="8" viewBox="0 0 8 8"><path d="M0.5 0.5 L7.5 7.5 M7.5 0.5 L0.5 7.5" stroke="#6E7072" stroke-width="1"/></svg>
<div style="position:absolute;left:427px;top:76px;width:1px;height:382px;background:#3D3E40;"></div>
<div style="position:absolute;left:370px;top:238.6px;width:1002px;height:21.85px;background:#323232;"></div>
<div style="position:absolute;left:381.80px;top:89.95px;font-size:12.4px;line-height:16px;color:#606366;font-family:'Liberation Mono', monospace;white-space:pre;letter-spacing:0.560px;">4</div>
<div style="position:absolute;left:381.80px;top:111.80px;font-size:12.4px;line-height:16px;color:#606366;font-family:'Liberation Mono', monospace;white-space:pre;letter-spacing:0.560px;">5</div>
<div style="position:absolute;left:381.80px;top:133.65px;font-size:12.4px;line-height:16px;color:#606366;font-family:'Liberation Mono', monospace;white-space:pre;letter-spacing:0.560px;">6</div>
<div style="position:absolute;left:381.80px;top:155.50px;font-size:12.4px;line-height:16px;color:#606366;font-family:'Liberation Mono', monospace;white-space:pre;letter-spacing:0.560px;">7</div>
<div style="position:absolute;left:381.80px;top:177.35px;font-size:12.4px;line-height:16px;color:#606366;font-family:'Liberation Mono', monospace;white-space:pre;letter-spacing:0.560px;">8</div>
<div style="position:absolute;left:381.80px;top:199.20px;font-size:12.4px;line-height:16px;color:#606366;font-family:'Liberation Mono', monospace;white-space:pre;letter-spacing:0.560px;">9</div>
<div style="position:absolute;left:373.80px;top:221.05px;font-size:12.4px;line-height:16px;color:#606366;font-family:'Liberation Mono', monospace;white-space:pre;letter-spacing:0.560px;">10</div>
<div style="position:absolute;left:373.80px;top:242.90px;font-size:12.4px;line-height:16px;color:#A4A3A3;font-family:'Liberation Mono', monospace;white-space:pre;letter-spacing:0.560px;">11</div>
<div style="position:absolute;left:373.80px;top:264.75px;font-size:12.4px;line-height:16px;color:#606366;font-family:'Liberation Mono', monospace;white-space:pre;letter-spacing:0.560px;">12</div>
<div style="position:absolute;left:373.80px;top:286.60px;font-size:12.4px;line-height:16px;color:#606366;font-family:'Liberation Mono', monospace;white-space:pre;letter-spacing:0.560px;">13</div>
<div style="position:absolute;left:373.80px;top:308.45px;font-size:12.4px;line-height:16px;color:#606366;font-family:'Liberation Mono', monospace;white-space:pre;letter-spacing:0.560px;">14</div>
<div style="position:absolute;left:373.80px;top:330.30px;font-size:12.4px;line-height:16px;color:#606366;font-family:'Liberation Mono', monospace;white-space:pre;letter-spacing:0.560px;">15</div>
<div style="position:absolute;left:370px;top:76px;width:1010px;height:382px;overflow:hidden"><div style="position:absolute;left:-370px;top:-76px;width:1400px;height:741px">
<div style="position:absolute;left:433.00px;top:67.93px;font-size:13.4px;line-height:17px;color:#CC7832;font-family:'Liberation Mono', monospace;white-space:pre;letter-spacing:-0.040px;">import</div>
<div style="position:absolute;left:481.00px;top:67.93px;font-size:13.4px;line-height:17px;color:#A9B7C6;font-family:'Liberation Mono', monospace;white-space:pre;letter-spacing:-0.040px;"> org.junit.</div>
<div style="position:absolute;left:569.00px;top:67.93px;font-size:13.4px;line-height:17px;color:#BBB529;font-family:'Liberation Mono', monospace;white-space:pre;letter-spacing:-0.040px;">Test</div>
<div style="position:absolute;left:601.00px;top:67.93px;font-size:13.4px;line-height:17px;color:#CC7832;font-family:'Liberation Mono', monospace;white-space:pre;letter-spacing:-0.040px;">;</div>
<div style="position:absolute;left:381.80px;top:68.10px;font-size:12.4px;line-height:16px;color:#606366;font-family:'Liberation Mono', monospace;white-space:pre;">3</div>
<svg style="position:absolute;left:421px;top:67px;" width="12" height="18" viewBox="0 0 12 18"><path d="M1.5 1.5 H10.5 V10 L6 14.5 L1.5 10Z" fill="#313335" stroke="#5C5E60"/><path d="M6 14.5 V18" stroke="#4A4C4E"/></svg>
</div></div>
<div style="position:absolute;left:433.00px;top:89.78px;font-size:13.4px;line-height:17px;color:#CC7832;font-family:'Liberation Mono', monospace;white-space:pre;letter-spacing:-0.040px;">import</div>
<div style="position:absolute;left:481.00px;top:89.78px;font-size:13.4px;line-height:17px;color:#CC7832;font-family:'Liberation Mono', monospace;white-space:pre;letter-spacing:-0.040px;"> static </div>
<div style="position:absolute;left:545.00px;top:89.78px;font-size:13.4px;line-height:17px;color:#A9B7C6;font-family:'Liberation Mono', monospace;white-space:pre;letter-spacing:-0.040px;">org.junit.Assert.*</div>
<div style="position:absolute;left:689.00px;top:89.78px;font-size:13.4px;line-height:17px;color:#CC7832;font-family:'Liberation Mono', monospace;white-space:pre;letter-spacing:-0.040px;">;</div>
<div style="position:absolute;left:433.00px;top:133.48px;font-size:13.4px;line-height:17px;color:#CC7832;font-family:'Liberation Mono', monospace;white-space:pre;letter-spacing:-0.040px;">public</div>
<div style="position:absolute;left:481.00px;top:133.48px;font-size:13.4px;line-height:17px;color:#CC7832;font-family:'Liberation Mono', monospace;white-space:pre;letter-spacing:-0.040px;"> class </div>
<div style="position:absolute;left:537.00px;top:133.48px;font-size:13.4px;line-height:17px;color:#A9B7C6;font-family:'Liberation Mono', monospace;white-space:pre;letter-spacing:-0.040px;">ValidateISBNTests {</div>
<div style="position:absolute;left:465.00px;top:177.18px;font-size:13.4px;line-height:17px;color:#BBB529;font-family:'Liberation Mono', monospace;white-space:pre;letter-spacing:-0.040px;">@Test</div>
<div style="position:absolute;left:465.00px;top:199.03px;font-size:13.4px;line-height:17px;color:#CC7832;font-family:'Liberation Mono', monospace;white-space:pre;letter-spacing:-0.040px;">public</div>
<div style="position:absolute;left:513.00px;top:199.03px;font-size:13.4px;line-height:17px;color:#CC7832;font-family:'Liberation Mono', monospace;white-space:pre;letter-spacing:-0.040px;"> void </div>
<div style="position:absolute;left:561.00px;top:199.03px;font-size:13.4px;line-height:17px;color:#FFC66D;font-family:'Liberation Mono', monospace;white-space:pre;letter-spacing:-0.040px;">checkValidateISBN</div>
<div style="position:absolute;left:697.00px;top:199.03px;font-size:13.4px;line-height:17px;color:#A9B7C6;font-family:'Liberation Mono', monospace;white-space:pre;letter-spacing:-0.040px;">(){</div>
<div style="position:absolute;left:497.00px;top:220.88px;font-size:13.4px;line-height:17px;color:#A9B7C6;font-family:'Liberation Mono', monospace;white-space:pre;letter-spacing:-0.040px;">ValidateISBN validateISBN = </div>
<div style="position:absolute;left:721.00px;top:220.88px;font-size:13.4px;line-height:17px;color:#CC7832;font-family:'Liberation Mono', monospace;white-space:pre;letter-spacing:-0.040px;">new </div>
<div style="position:absolute;left:753.00px;top:220.88px;font-size:13.4px;line-height:17px;color:#A9B7C6;font-family:'Liberation Mono', monospace;white-space:pre;letter-spacing:-0.040px;">ValidateISBN()</div>
<div style="position:absolute;left:865.00px;top:220.88px;font-size:13.4px;line-height:17px;color:#CC7832;font-family:'Liberation Mono', monospace;white-space:pre;letter-spacing:-0.040px;">;</div>
<div style="position:absolute;left:809px;top:239.1px;width:8px;height:21.35px;background:#3B514D;"></div>
<div style="position:absolute;left:897px;top:239.1px;width:8px;height:21.35px;background:#3B514D;"></div>
<div style="position:absolute;left:497.00px;top:242.73px;font-size:13.4px;line-height:17px;color:#CC7832;font-family:'Liberation Mono', monospace;white-space:pre;letter-spacing:-0.040px;">boolean </div>
<div style="position:absolute;left:561.00px;top:242.73px;font-size:13.4px;line-height:17px;color:#A9B7C6;font-family:'Liberation Mono', monospace;white-space:pre;letter-spacing:-0.040px;">result = validateISBN.</div>
<div style="position:absolute;left:737.00px;top:242.73px;font-size:13.4px;line-height:17px;color:#D6534C;font-family:'Liberation Mono', monospace;white-space:pre;letter-spacing:-0.040px;">checkISBN</div>
<div style="position:absolute;left:809.00px;top:242.73px;font-size:13.4px;line-height:17px;color:#FFEF28;font-family:'Liberation Mono', monospace;white-space:pre;letter-spacing:-0.040px;">(</div>
<div style="position:absolute;left:817.00px;top:242.73px;font-size:13.4px;line-height:17px;color:#6897BB;font-family:'Liberation Mono', monospace;white-space:pre;letter-spacing:-0.040px;">0140441926</div>
<div style="position:absolute;left:897.00px;top:242.73px;font-size:13.4px;line-height:17px;color:#FFEF28;font-family:'Liberation Mono', monospace;white-space:pre;letter-spacing:-0.040px;">)</div>
<div style="position:absolute;left:905.00px;top:242.73px;font-size:13.4px;line-height:17px;color:#CC7832;font-family:'Liberation Mono', monospace;white-space:pre;letter-spacing:-0.040px;">;</div>
<svg style="position:absolute;left:817px;top:255.99999999999997px;" width="81" height="4" viewBox="0 0 81 4"><path d="M0 3.2 L2 0.8 L4 3.2 M4 3.2 L6 0.8 L8 3.2 M8 3.2 L10 0.8 L12 3.2 M12 3.2 L14 0.8 L16 3.2 M16 3.2 L18 0.8 L20 3.2 M20 3.2 L22 0.8 L24 3.2 M24 3.2 L26 0.8 L28 3.2 M28 3.2 L30 0.8 L32 3.2 M32 3.2 L34 0.8 L36 3.2 M36 3.2 L38 0.8 L40 3.2 M40 3.2 L42 0.8 L44 3.2 M44 3.2 L46 0.8 L48 3.2 M48 3.2 L50 0.8 L52 3.2 M52 3.2 L54 0.8 L56 3.2 M56 3.2 L58 0.8 L60 3.2 M60 3.2 L62 0.8 L64 3.2 M64 3.2 L66 0.8 L68 3.2 M68 3.2 L70 0.8 L72 3.2 M72 3.2 L74 0.8 L76 3.2 M76 3.2 L78 0.8 L80 3.2 " fill="none" stroke="#C84540" stroke-width="1"/></svg>
<div style="position:absolute;left:497.00px;top:264.58px;font-size:13.4px;line-height:17px;color:#A9B7C6;font-family:'Liberation Mono', monospace;white-space:pre;font-style:italic;letter-spacing:-0.040px;">assertTrue</div>
<div style="position:absolute;left:577.00px;top:264.58px;font-size:13.4px;line-height:17px;color:#A9B7C6;font-family:'Liberation Mono', monospace;white-space:pre;letter-spacing:-0.040px;">(result)</div>
<div style="position:absolute;left:641.00px;top:264.58px;font-size:13.4px;line-height:17px;color:#CC7832;font-family:'Liberation Mono', monospace;white-space:pre;letter-spacing:-0.040px;">;</div>
<div style="position:absolute;left:465.00px;top:286.43px;font-size:13.4px;line-height:17px;color:#A9B7C6;font-family:'Liberation Mono', monospace;white-space:pre;letter-spacing:-0.040px;">}</div>
<div style="position:absolute;left:433.00px;top:308.28px;font-size:13.4px;line-height:17px;color:#A9B7C6;font-family:'Liberation Mono', monospace;white-space:pre;letter-spacing:-0.040px;">}</div>
<div style="position:absolute;left:462px;top:216.75px;width:1px;height:65.55000000000001px;background:#3B3B3B;"></div>
<svg style="position:absolute;left:396px;top:133px;" width="16" height="15" viewBox="0 0 16 15"><circle cx="6" cy="6" r="5.3" fill="#C75450"/><rect x="5.2" y="2.6" width="1.6" height="4" fill="#2B2B2B" opacity="0.7"/><rect x="5.2" y="7.6" width="1.6" height="1.5" fill="#2B2B2B" opacity="0.7"/><path d="M8 7 L14 10.5 L8 14Z" fill="#499C54"/></svg>
<svg style="position:absolute;left:396px;top:198px;" width="16" height="15" viewBox="0 0 16 15"><circle cx="6" cy="6" r="5.3" fill="#C75450"/><rect x="5.2" y="2.6" width="1.6" height="4" fill="#2B2B2B" opacity="0.7"/><rect x="5.2" y="7.6" width="1.6" height="1.5" fill="#2B2B2B" opacity="0.7"/><path d="M8 7 L14 10.5 L8 14Z" fill="#499C54"/></svg>
<svg style="position:absolute;left:421.5px;top:200.89999999999998px;" width="12" height="14" viewBox="0 0 12 14"><path d="M1.5 1.5 H10.5 V8 L6 12 L1.5 8Z" fill="#313335" stroke="#5C5E60"/><path d="M3.8 5 H8.2" stroke="#5C5E60"/></svg>
<svg style="position:absolute;left:421.5px;top:286.3px;" width="12" height="14" viewBox="0 0 12 14"><path d="M1.5 12.5 H10.5 V6 L6 2 L1.5 6Z" fill="#313335" stroke="#5C5E60"/><path d="M3.8 9 H8.2" stroke="#5C5E60"/></svg>
<svg style="position:absolute;left:421.5px;top:88.64999999999998px;" width="12" height="14" viewBox="0 0 12 14"><path d="M1.5 12.5 H10.5 V6 L6 2 L1.5 6Z" fill="#313335" stroke="#5C5E60"/><path d="M3.8 9 H8.2" stroke="#5C5E60"/></svg>
<svg style="position:absolute;left:439px;top:241.6px;" width="12" height="16" viewBox="0 0 12 16"><circle cx="6" cy="5.5" r="5" fill="#F0A732"/><rect x="3.5" y="9" width="5" height="2.5" fill="#F0A732"/><rect x="3.5" y="12.2" width="5" height="1.2" fill="#AFB1B3"/><rect x="4" y="14" width="4" height="1" fill="#AFB1B3"/></svg>
<svg style="position:absolute;left:1318px;top:82px;" width="13" height="13" viewBox="0 0 13 13"><circle cx="6.5" cy="6.5" r="5.8" fill="#C22F2F"/><rect x="5.7" y="2.6" width="1.7" height="4.8" fill="#2B2B2B"/><rect x="5.7" y="8.6" width="1.7" height="1.7" fill="#2B2B2B"/></svg>
<div style="position:absolute;left:1331.00px;top:81.51px;font-size:11.5px;line-height:15px;color:#AAAAAA;font-family:'Liberation Sans', sans-serif;white-space:pre;">2</div>
<svg style="position:absolute;left:1345px;top:84px;" width="11" height="7" viewBox="0 0 11 7"><path d="M1 6 L5.5 1.5 L10 6" fill="none" stroke="#AFB1B3" stroke-width="1.2"/></svg>
<svg style="position:absolute;left:1364px;top:85px;" width="11" height="7" viewBox="0 0 11 7"><path d="M1 1 L5.5 5.5 L10 1" fill="none" stroke="#AFB1B3" stroke-width="1.2"/></svg>
<div style="position:absolute;left:1372px;top:146px;width:8px;height:312px;background:#474747;"></div>
<div style="position:absolute;left:1368px;top:279px;width:12px;height:1.5px;background:#C0504D;"></div>
<div style="position:absolute;left:26.00px;top:463.51px;font-size:11.5px;line-height:15px;color:#BBBBBB;font-family:'Liberation Sans', sans-serif;white-space:pre;transform-origin:0 0;transform:scaleX(0.9241);">Build:</div>
<div style="position:absolute;left:70.50px;top:463.51px;font-size:11.5px;line-height:15px;color:#BBBBBB;font-family:'Liberation Sans', sans-serif;white-space:pre;transform-origin:0 0;transform:scaleX(0.8192);">Sync</div>
<svg style="position:absolute;left:98px;top:467px;" width="8" height="8" viewBox="0 0 8 8"><path d="M0.5 0.5 L7.5 7.5 M7.5 0.5 L0.5 7.5" stroke="#6E7072" stroke-width="1"/></svg>
<div style="position:absolute;left:127.70px;top:463.51px;font-size:11.5px;line-height:15px;color:#BBBBBB;font-family:'Liberation Sans', sans-serif;white-space:pre;transform-origin:0 0;transform:scaleX(0.9437);">Build Output</div>
<svg style="position:absolute;left:193.5px;top:467px;" width="8" height="8" viewBox="0 0 8 8"><path d="M0.5 0.5 L7.5 7.5 M7.5 0.5 L0.5 7.5" stroke="#6E7072" stroke-width="1"/></svg>
<div style="position:absolute;left:115px;top:480px;width:97px;height:3px;background:#747A80;"></div>
<svg style="position:absolute;left:1338px;top:464px;" width="14" height="14" viewBox="0 0 14 14"><path d="M7 0.8 L8.4 2.5 L10.7 2 L10.9 4.2 L13.1 5 L12 7 L13.1 9 L10.9 9.8 L10.7 12 L8.4 11.5 L7 13.2 L5.6 11.5 L3.3 12 L3.1 9.8 L0.9 9 L2 7 L0.9 5 L3.1 4.2 L3.3 2 L5.6 2.5 Z" fill="#AFB1B3"/><circle cx="7" cy="7" r="2.2" fill="#3C3F41"/></svg>
<div style="position:absolute;left:1364px;top:470px;width:11px;height:1.6px;background:#AFB1B3;"></div>
<svg style="position:absolute;left:25px;top:489px;" width="15" height="14" viewBox="0 0 15 14"><path d="M1.5 8 L8.5 1" stroke="#59A869" stroke-width="3.2"/><path d="M5 4.5 L13 12.5" stroke="#59A869" stroke-width="2.3"/></svg>
<div style="position:absolute;left:28px;top:516px;width:10px;height:10px;background:#5C5E60;"></div>
<div style="position:absolute;left:24px;top:535px;width:18px;height:1px;background:#515151;"></div>
<svg style="position:absolute;left:26px;top:543px;" width="14" height="14" viewBox="0 0 14 14"><path d="M2 12 L8 6" stroke="#AFB1B3" stroke-width="2.6" stroke-linecap="round"/><path d="M7 5 A3.6 3.6 0 1 1 10 8 L8.5 6.5 L10.5 4.5 L9 3 L7 5Z" fill="#AFB1B3"/><circle cx="9.5" cy="4.5" r="3.6" fill="#AFB1B3"/><path d="M9.5 4.5 L12.5 1.5" stroke="#3C3F41" stroke-width="2"/></svg>
<div style="position:absolute;left:24px;top:565px;width:18px;height:1px;background:#515151;"></div>
<svg style="position:absolute;left:26px;top:573px;" width="14" height="14" viewBox="0 0 14 14"><path d="M1 13 L6 8" stroke="#AFB1B3" stroke-width="1.5"/><path d="M8 1 L13 6 L11 7 L8.5 10.5 L3.5 5.5 L7 3Z" fill="#AFB1B3"/></svg>
<svg style="position:absolute;left:25px;top:598px;" width="16" height="13" viewBox="0 0 16 13"><path d="M1 5.5 C4 1 12 1 15 5.5 C12 10 4 10 1 5.5Z" fill="#AFB1B3"/><circle cx="8" cy="5.5" r="2.6" fill="#3C3F41"/><circle cx="8" cy="5.5" r="1.3" fill="#AFB1B3"/><path d="M11 10 H15 L13 12.5Z" fill="#AFB1B3"/></svg>
<div style="position:absolute;left:47px;top:519.9px;width:439px;height:18.2px;background:#0D293E;"></div>
<svg style="position:absolute;left:52px;top:487.8px;" width="10" height="8" viewBox="0 0 10 8"><path d="M1.5 2 L5 5.5 L8.5 2" fill="none" stroke="#AFB1B3" stroke-width="1.1"/></svg>
<svg style="position:absolute;left:68.8px;top:485.7px;" width="14" height="14" viewBox="0 0 14 14"><circle cx="7" cy="7" r="6" fill="#C75450"/><rect x="6.1" y="2.5" width="1.8" height="4.5" fill="#3C3F41"/><rect x="6.1" y="8" width="1.8" height="1.8" fill="#3C3F41"/></svg>
<div style="position:absolute;left:86.80px;top:486.01px;font-size:11.5px;line-height:15px;color:#BBBBBB;font-family:'Liberation Sans', sans-serif;white-space:pre;font-weight:bold;transform-origin:0 0;transform:scaleX(0.9259);">TDD:</div>
<div style="position:absolute;left:115.00px;top:486.01px;font-size:11.5px;line-height:15px;color:#BBBBBB;font-family:'Liberation Sans', sans-serif;white-space:pre;transform-origin:0 0;transform:scaleX(0.9855);">build failed</div>
<div style="position:absolute;left:173.20px;top:486.01px;font-size:11.5px;line-height:15px;color:#8C8C8C;font-family:'Liberation Sans', sans-serif;white-space:pre;transform-origin:0 0;transform:scaleX(0.9534);">At 6/16/2022 12:43 AM with 1 error</div>
<div style="position:absolute;left:426.80px;top:486.86px;font-size:10.5px;line-height:14px;color:#7E7E7E;font-family:'Liberation Sans', sans-serif;white-space:pre;transform-origin:0 0;transform:scaleX(0.8485);">1 sec, 219 ms</div>
<svg style="position:absolute;left:68.8px;top:506px;" width="10" height="8" viewBox="0 0 10 8"><path d="M1.5 2 L5 5.5 L8.5 2" fill="none" stroke="#AFB1B3" stroke-width="1.1"/></svg>
<svg style="position:absolute;left:86px;top:503px;" width="14" height="14" viewBox="0 0 14 14"><path d="M4 0.5 H9 V7 H2 V3Z" fill="#9AA7B0"/><rect x="0" y="8" width="14" height="6" fill="#3E86A0"/><path d="M4.5 9.5 V12.5 H3" stroke="#243340" fill="none" stroke-width="0.9"/></svg>
<div style="position:absolute;left:102.50px;top:504.11px;font-size:11.5px;line-height:15px;color:#BBBBBB;font-family:'Liberation Sans', sans-serif;white-space:pre;transform-origin:0 0;transform:scaleX(0.9143);">ValidateISBNTests.java</div>
<div style="position:absolute;left:214.70px;top:504.11px;font-size:11.5px;line-height:15px;color:#8C8C8C;font-family:'Liberation Sans', sans-serif;white-space:pre;transform-origin:0 0;transform:scaleX(0.9901);">src\test\java\com\book\tdd 1 error</div>
<svg style="position:absolute;left:101.7px;top:522px;" width="14" height="14" viewBox="0 0 14 14"><circle cx="7" cy="7" r="6" fill="#C75450"/><rect x="6.1" y="2.5" width="1.8" height="4.5" fill="#3C3F41"/><rect x="6.1" y="8" width="1.8" height="1.8" fill="#3C3F41"/></svg>
<div style="position:absolute;left:119.40px;top:522.61px;font-size:11.5px;line-height:15px;color:#BBBBBB;font-family:'Liberation Sans', sans-serif;white-space:pre;transform-origin:0 0;transform:scaleX(0.9355);">integer number too large: 0140441926 :11</div>
<div style="position:absolute;left:500.00px;top:486.53px;font-size:13.4px;line-height:17px;color:#287BDE;font-family:'Liberation Mono', monospace;white-space:pre;letter-spacing:-0.040px;">C:\Users\Nipuna\Desktop\Medium TDD\src\test\java\com\book\tdd\ValidateISBNTests.java</div>
<div style="position:absolute;left:500px;top:500px;width:672px;height:1px;background:#287BDE;"></div>
<div style="position:absolute;left:1172.00px;top:486.53px;font-size:13.4px;line-height:17px;color:#E0605B;font-family:'Liberation Mono', monospace;white-space:pre;letter-spacing:-0.040px;">:11:49</div>
<div style="position:absolute;left:500.00px;top:508.33px;font-size:13.4px;line-height:17px;color:#E0605B;font-family:'Liberation Mono', monospace;white-space:pre;letter-spacing:-0.040px;">java: integer number too large: 0140441926</div>
<svg style="position:absolute;left:1361px;top:490px;" width="14" height="13" viewBox="0 0 14 13"><path d="M0.5 1.5 H13 M0.5 5.5 H10.5 A3 3 0 0 1 10.5 11.5 H6" fill="none" stroke="#AFB1B3" stroke-width="1.6"/><path d="M7.5 8.5 L4.5 11.5 L7.5 14" fill="none" stroke="#AFB1B3" stroke-width="1.4"/><path d="M0.5 11 H2.5" stroke="#AFB1B3" stroke-width="1.6"/></svg>
<div style="position:absolute;left:1358px;top:510px;width:20px;height:20px;background:#4C5052;border-radius:3px;"></div>
<svg style="position:absolute;left:1361px;top:513px;" width="14" height="14" viewBox="0 0 14 14"><path d="M1 2.5 H5 M1 6.5 H5 M1 12 H13" stroke="#AFB1B3" stroke-width="1.6"/><path d="M9.5 0.5 V9 M6.5 6 L9.5 9.5 L12.5 6" fill="none" stroke="#AFB1B3" stroke-width="1.6"/></svg>
<div style="position:absolute;left:405px;top:703px;width:52px;height:20px;background:#2F3133;"></div>
<svg style="position:absolute;left:30px;top:710px;" width="8" height="10" viewBox="0 0 8 10"><path d="M0.5 0.5 L7.5 5 L0.5 9.5Z" fill="#AFB1B3"/></svg>
<div style="position:absolute;left:44.00px;top:708.01px;font-size:11.5px;line-height:15px;color:#BBBBBB;font-family:'Liberation Sans', sans-serif;white-space:pre;transform-origin:0 0;transform:scaleX(0.7714);">Run</div>
<svg style="position:absolute;left:78px;top:709px;" width="10" height="10" viewBox="0 0 10 10"><path d="M0 1 H2 M0 4.5 H2 M0 8 H2 M3.5 1 H10 M3.5 4.5 H10 M3.5 8 H10" stroke="#AFB1B3" stroke-width="1.6"/></svg>
<div style="position:absolute;left:92.20px;top:708.01px;font-size:11.5px;line-height:15px;color:#BBBBBB;font-family:'Liberation Sans', sans-serif;white-space:pre;transform-origin:0 0;transform:scaleX(0.7697);">TODO</div>
<svg style="position:absolute;left:136.5px;top:707.6999999999999px;" width="12" height="12" viewBox="0 0 12 12"><circle cx="6.2" cy="6.2" r="5.2" fill="#DB5C5C"/><rect x="5.3" y="1.7000000000000002" width="1.8" height="4.5" fill="#3C3F41"/><rect x="5.3" y="7.2" width="1.8" height="1.8" fill="#3C3F41"/></svg>
<div style="position:absolute;left:152.70px;top:708.01px;font-size:11.5px;line-height:15px;color:#BBBBBB;font-family:'Liberation Sans', sans-serif;white-space:pre;transform-origin:0 0;transform:scaleX(0.8122);">Problems</div>
<svg style="position:absolute;left:211px;top:707px;" width="13" height="14" viewBox="0 0 13 14"><circle cx="5.5" cy="6" r="4.6" fill="none" stroke="#AFB1B3" stroke-width="1.4"/><path d="M5.5 3 V6 L7 7.5" fill="none" stroke="#AFB1B3" stroke-width="1.2"/><path d="M6.5 6.5 L12.5 10 L6.5 13.5Z" fill="#AFB1B3"/></svg>
<div style="position:absolute;left:227.00px;top:708.01px;font-size:11.5px;line-height:15px;color:#BBBBBB;font-family:'Liberation Sans', sans-serif;white-space:pre;transform-origin:0 0;transform:scaleX(0.8243);">Profiler</div>
<svg style="position:absolute;left:277px;top:708px;" width="11" height="10" viewBox="0 0 11 10"><rect x="0" y="0" width="11" height="10" fill="#AFB1B3"/><path d="M2 2.5 L4.5 4.5 L2 6.5" fill="none" stroke="#3C3F41" stroke-width="1"/><path d="M5 8 H9" stroke="#3C3F41"/></svg>
<div style="position:absolute;left:292.10px;top:708.01px;font-size:11.5px;line-height:15px;color:#BBBBBB;font-family:'Liberation Sans', sans-serif;white-space:pre;transform-origin:0 0;transform:scaleX(0.8372);">Terminal</div>
<svg style="position:absolute;left:347px;top:708px;" width="12" height="12" viewBox="0 0 12 12"><path d="M6 0.5 L11.2 3.3 V8.7 L6 11.5 L0.8 8.7 V3.3Z" fill="#AFB1B3"/><path d="M4.5 3.5 L8.5 6 L4.5 8.5Z" fill="#3C3F41"/></svg>
<div style="position:absolute;left:361.80px;top:708.01px;font-size:11.5px;line-height:15px;color:#BBBBBB;font-family:'Liberation Sans', sans-serif;white-space:pre;transform-origin:0 0;transform:scaleX(0.7773);">Services</div>
<svg style="position:absolute;left:413px;top:706px;" width="14" height="14" viewBox="0 0 14 14"><path d="M1.5 8 L8.5 1" stroke="#AFB1B3" stroke-width="3.2"/><path d="M5 4.5 L13 12.5" stroke="#AFB1B3" stroke-width="2.3"/></svg>
<div style="position:absolute;left:429.70px;top:708.01px;font-size:11.5px;line-height:15px;color:#DDDDDD;font-family:'Liberation Sans', sans-serif;white-space:pre;transform-origin:0 0;transform:scaleX(0.7808);">Build</div>
<svg style="position:absolute;left:468px;top:707px;" width="12" height="13" viewBox="0 0 12 13"><path d="M6 0.5 L11.5 3.5 L6 6.5 L0.5 3.5Z" fill="#AFB1B3"/><path d="M0.5 6.5 L6 9.5 L11.5 6.5 M0.5 9 L6 12 L11.5 9" fill="none" stroke="#AFB1B3" stroke-width="1.1"/></svg>
<div style="position:absolute;left:484.00px;top:708.01px;font-size:11.5px;line-height:15px;color:#BBBBBB;font-family:'Liberation Sans', sans-serif;white-space:pre;transform-origin:0 0;transform:scaleX(0.8014);">Dependencies</div>
<svg style="position:absolute;left:1314px;top:707px;" width="12" height="12" viewBox="0 0 12 12"><circle cx="6" cy="6" r="6" fill="#499C54"/><text x="3.8" y="9.3" font-size="8.5" font-family="Liberation Sans" font-weight="bold" fill="#fff">1</text></svg>
<div style="position:absolute;left:1330.60px;top:708.01px;font-size:11.5px;line-height:15px;color:#BBBBBB;font-family:'Liberation Sans', sans-serif;white-space:pre;transform-origin:0 0;transform:scaleX(0.7846);">Event Log</div>
<svg style="position:absolute;left:5px;top:727px;" width="12" height="12" viewBox="0 0 12 12"><rect x="0.5" y="2.5" width="9" height="9" fill="none" stroke="#7B7E80"/><rect x="2.5" y="0.5" width="9" height="9" fill="#3C3F41" stroke="#AFB1B3"/></svg>
<div style="position:absolute;left:25.50px;top:725.91px;font-size:11.5px;line-height:15px;color:#BBBBBB;font-family:'Liberation Sans', sans-serif;white-space:pre;transform-origin:0 0;transform:scaleX(0.9611);">Integer number too large</div>
<div style="position:absolute;left:1217.70px;top:725.91px;font-size:11.5px;line-height:15px;color:#BBBBBB;font-family:'Liberation Sans', sans-serif;white-space:pre;transform-origin:0 0;transform:scaleX(0.8483);">11:49</div>
<div style="position:absolute;left:1253.70px;top:725.91px;font-size:11.5px;line-height:15px;color:#BBBBBB;font-family:'Liberation Sans', sans-serif;white-space:pre;transform-origin:0 0;transform:scaleX(0.7633);">CRLF</div>
<div style="position:absolute;left:1288.00px;top:725.91px;font-size:11.5px;line-height:15px;color:#BBBBBB;font-family:'Liberation Sans', sans-serif;white-space:pre;transform-origin:0 0;transform:scaleX(0.8576);">UTF-8</div>
<div style="position:absolute;left:1327.00px;top:725.91px;font-size:11.5px;line-height:15px;color:#BBBBBB;font-family:'Liberation Sans', sans-serif;white-space:pre;transform-origin:0 0;transform:scaleX(0.8913);">4 spaces</div>
<svg style="position:absolute;left:1378px;top:726px;" width="12" height="13" viewBox="0 0 12 13"><path d="M4 6 V3.5 A2.5 2.5 0 0 1 9 3.5" fill="none" stroke="#AFB1B3" stroke-width="1.3"/><rect x="1" y="6" width="9" height="6.5" fill="#AFB1B3"/></svg>
<div style="position:absolute;left:0.00px;top:-10.04px;font-size:10.2px;line-height:13px;color:#DDDDDD;font-family:'Liberation Sans', sans-serif;white-space:pre;left:0;top:0;line-height:14px;transform-origin:0 0;transform:translate(5.88px,88.30px) rotate(-90deg) scaleX(0.9156);">Project</div>
<svg style="position:absolute;left:5px;top:93px;" width="11" height="9" viewBox="0 0 11 9"><path d="M0 0 H4 L5 1.5 H11 V9 H0Z" fill="#AFB1B3"/></svg>
<div style="position:absolute;left:0.00px;top:-10.04px;font-size:10.2px;line-height:13px;color:#BBBBBB;font-family:'Liberation Sans', sans-serif;white-space:pre;left:0;top:0;line-height:14px;transform-origin:0 0;transform:translate(6.08px,599.60px) rotate(-90deg) scaleX(0.7595);">Structure</div>
<svg style="position:absolute;left:5px;top:609px;" width="11" height="11" viewBox="0 0 11 11"><rect x="0" y="6" width="4.5" height="4.5" fill="#AFB1B3"/><rect x="6" y="6" width="4.5" height="4.5" fill="#AFB1B3"/><rect x="6" y="0.5" width="4.5" height="4.5" fill="#AFB1B3"/></svg>
<div style="position:absolute;left:0.00px;top:-10.04px;font-size:10.2px;line-height:13px;color:#BBBBBB;font-family:'Liberation Sans', sans-serif;white-space:pre;left:0;top:0;line-height:14px;transform-origin:0 0;transform:translate(6.08px,671.40px) rotate(-90deg) scaleX(0.7690);">Favorites</div>
<svg style="position:absolute;left:4px;top:680px;" width="13" height="13" viewBox="0 0 13 13"><path d="M6.5 0.5 L8.2 4.8 L12.5 4.9 L9.1 7.7 L10.4 12.2 L6.5 9.6 L2.6 12.2 L3.9 7.7 L0.5 4.9 L4.8 4.8Z" fill="#AFB1B3"/></svg>
<svg style="position:absolute;left:1384px;top:57px;" width="13" height="13" viewBox="0 0 13 13"><ellipse cx="6.5" cy="2.5" rx="5.5" ry="2" fill="#AFB1B3"/><path d="M1 4 V10.5 A5.5 2 0 0 0 12 10.5 V4" fill="#AFB1B3"/><path d="M1 5.5 A5.5 2 0 0 0 12 5.5 M1 8.2 A5.5 2 0 0 0 12 8.2" fill="none" stroke="#3C3F41" stroke-width="0.9"/></svg>
<div style="position:absolute;left:0.00px;top:-10.04px;font-size:10.2px;line-height:13px;color:#BBBBBB;font-family:'Liberation Sans', sans-serif;white-space:pre;left:0;top:0;line-height:14px;transform-origin:0 0;transform:translate(1395.62px,76.20px) rotate(90deg) scaleX(0.8886);">Database</div>
<div style="position:absolute;left:1383.00px;top:130.15px;font-size:14px;line-height:18px;color:#AFB1B3;font-family:'Liberation Sans', sans-serif;white-space:pre;font-weight:bold;font-style:italic;letter-spacing:-0.500px;">m</div>
<div style="position:absolute;left:0.00px;top:-10.04px;font-size:10.2px;line-height:13px;color:#BBBBBB;font-family:'Liberation Sans', sans-serif;white-space:pre;left:0;top:0;line-height:14px;transform-origin:0 0;transform:translate(1395.32px,150.80px) rotate(90deg) scaleX(0.8871);">Maven</div>
</body></html>
